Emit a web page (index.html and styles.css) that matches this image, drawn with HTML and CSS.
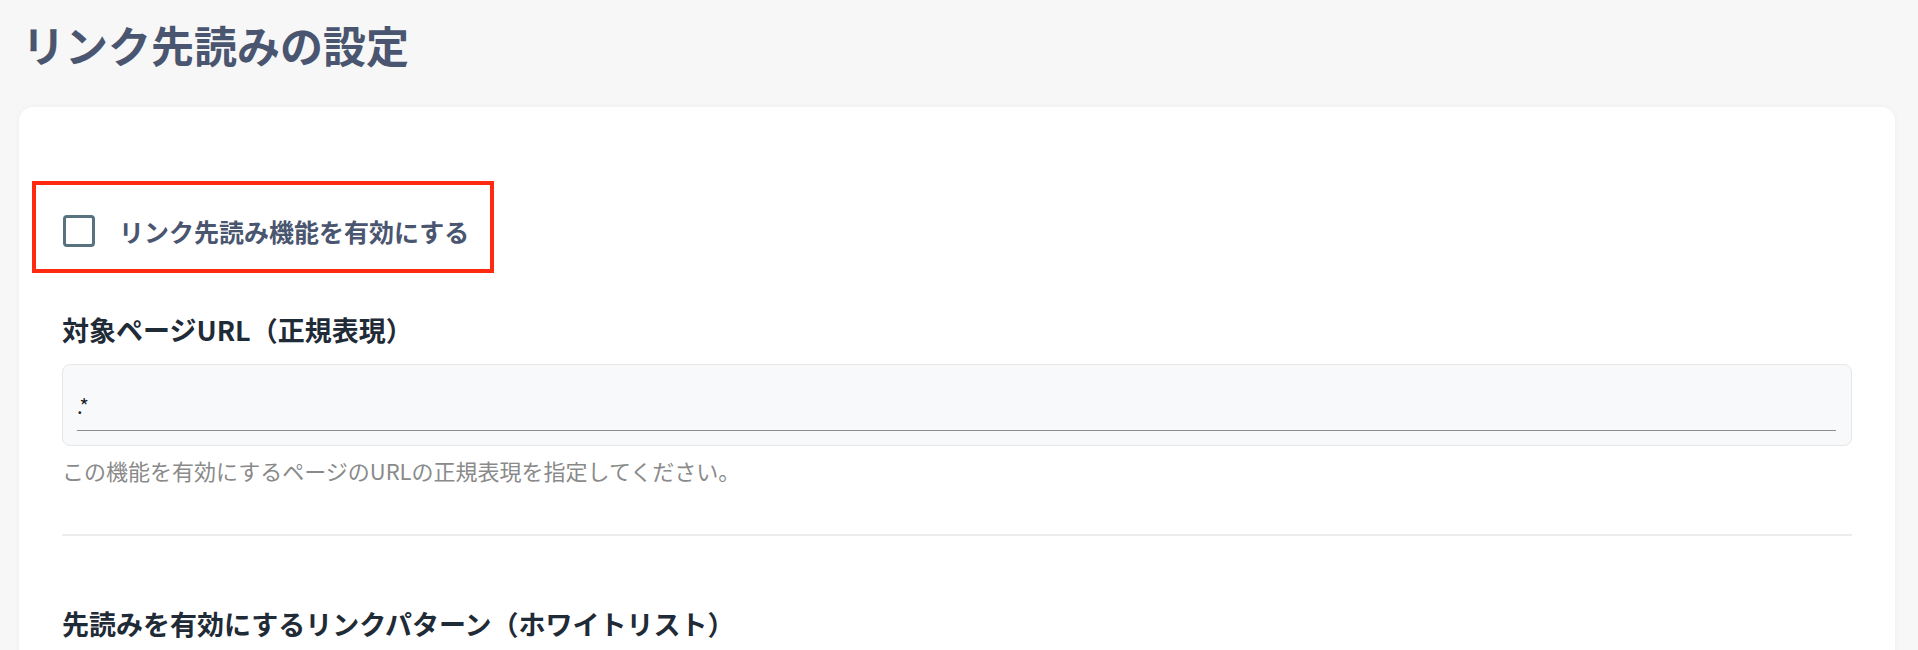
FILE: index.html
```html
<!DOCTYPE html>
<html lang="ja">
<head>
  <meta charset="UTF-8">
  <meta name="viewport" content="width=device-width, initial-scale=1.0">
  <title>リンク先読みの設定</title>
  <link rel="stylesheet" href="styles.css">
</head>
<body>
  <main class="page">
    <h1 class="page-title">リンク先読みの設定</h1>
    <section class="card">
      <div class="highlight">
        <label class="check-row">
          <input type="checkbox" class="check-input">
          <span class="check-box"></span>
          <span class="check-label">リンク先読み機能を有効にする</span>
        </label>
      </div>

      <div class="field">
        <h2 class="field-title">対象ページURL（正規表現）</h2>
        <div class="text-box">
          <input type="text" class="text-input" value=".*">
        </div>
        <p class="field-help">この機能を有効にするページのURLの正規表現を指定してください。</p>
      </div>

      <hr class="divider">

      <div class="field">
        <h2 class="field-title">先読みを有効にするリンクパターン（ホワイトリスト）</h2>
      </div>
    </section>
  </main>
</body>
</html>
```

FILE: styles.css
```css
html, body {
  margin: 0;
  background: #f7f7f7;
  font-family: "Noto Sans CJK JP", "Noto Sans", sans-serif;
}
.page {
  padding: 19px 23px 0 19px;
}
.page-title {
  margin: 0 0 36px 3px;
  font-size: 43px;
  line-height: 1.2;
  font-weight: 700;
  color: #4a5570;
}
.card {
  background: #fff;
  border-radius: 14px;
  box-shadow: 0 0 6px rgba(0, 0, 0, 0.04);
  padding: 74px 43px 40px;
}
.highlight {
  display: inline-block;
  margin-left: -30px;
  border: 4px solid #ff2a0f;
  padding: 30px 21px 22px 27px;
}
.check-row {
  display: flex;
  align-items: center;
  gap: 24px;
  cursor: pointer;
}
.check-input {
  display: none;
}
.check-box {
  width: 26px;
  height: 26px;
  border: 3px solid #587280;
  border-radius: 4px;
}
.check-label {
  font-size: 25px;
  line-height: 32px;
  font-weight: 700;
  color: #4a5570;
}
.field-title {
  margin: 38px 0 16px;
  font-size: 27px;
  line-height: 1.4;
  font-weight: 700;
  color: #1f2b36;
}
.text-box {
  background: #f8f9fb;
  border: 1px solid #e6e6e6;
  border-radius: 8px;
  padding: 13px 15px 14px 14px;
}
.text-input {
  display: block;
  box-sizing: border-box;
  width: 100%;
  border: none;
  border-bottom: 1px solid #8d8d8d;
  background: transparent;
  padding: 16px 0 12px;
  font-family: "Noto Sans CJK JP", "Noto Sans", sans-serif;
  font-size: 20px;
  line-height: 24px;
  color: #222;
  outline: none;
}
.field-help {
  margin: 8px 0 0;
  font-size: 22px;
  line-height: 1.5;
  color: #8a8a8a;
}
.divider {
  margin: 47px 0 0;
  border: none;
  border-top: 2px solid #ececec;
}
.divider + .field .field-title {
  margin-top: 69px;
}
```
